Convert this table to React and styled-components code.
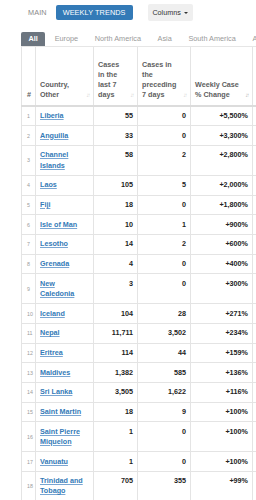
import styled, { createGlobalStyle } from "styled-components";

const GlobalStyle = createGlobalStyle`
  html, body {
    margin: 0;
    padding: 0;
    background: #fff;
    font-family: "Liberation Sans", Arial, sans-serif;
    overflow: hidden;
  }
`;

const Page = styled.div`
  width: 256px;
  height: 500px;
  overflow: hidden;
  padding-left: 21px;
  box-sizing: border-box;
`;

const TopBar = styled.div`
  display: flex;
  align-items: center;
  height: 25px;
`;

const ModeButton = styled.button`
  font-family: inherit;
  font-size: 7.3px;
  height: 14.5px;
  padding: 0 7px;
  border: none;
  border-radius: 2px;
  margin-right: ${(p) => (p.$active ? "15px" : "2px")};
  background: ${(p) => (p.$active ? "#337ab7" : "transparent")};
  color: ${(p) => (p.$active ? "#fff" : "#8a8a8a")};
  letter-spacing: 0.1px;
  text-transform: uppercase;
  cursor: pointer;
`;

const ColumnsButton = styled.button`
  font-family: inherit;
  font-size: 7.2px;
  height: 17px;
  width: 45px;
  padding: 0;
  border: none;
  border-radius: 2px;
  background: #efefef;
  color: #333;
  display: flex;
  align-items: center;
  justify-content: center;
  gap: 3px;
`;

const Caret = styled.span`
  width: 0;
  height: 0;
  border-left: 2px solid transparent;
  border-right: 2px solid transparent;
  border-top: 2px solid #333;
`;

const Tabs = styled.div`
  display: flex;
  align-items: center;
  height: 14px;
  margin-top: 6.5px;
  border-bottom: 1px solid #e6e6e6;
  white-space: nowrap;
`;

const Tab = styled.div`
  font-size: 7.3px;
  height: 14px;
  line-height: 14px;
  padding: 0 ${(p) => (p.$active ? "7.5px" : "8.3px")};
  margin-right: ${(p) => (p.$active ? "1px" : "0")};
  border-radius: 2px 2px 0 0;
  background: ${(p) => (p.$active ? "#6c757f" : "transparent")};
  color: ${(p) => (p.$active ? "#fff" : "#9a9a9a")};
  font-weight: ${(p) => (p.$active ? "bold" : "normal")};
`;

const Table = styled.table`
  border-collapse: collapse;
  table-layout: fixed;
  width: 292px;
  font-size: 7.2px;
  line-height: 10.3px;
`;

const Th = styled.th`
  border: 1px solid #e4e4e4;
  border-top: none;
  border-bottom: 2px solid #dcdcdc;
  vertical-align: bottom;
  text-align: left;
  padding: 13px 4px 4px;
  color: #5e5e5e;
  font-weight: bold;
  position: relative;
`;

const IndexTh = styled(Th)`
  padding-left: 5px;
  padding-right: 0;
`;

const SortIcon = styled.span`
  position: absolute;
  right: 4px;
  bottom: 4px;
  font-size: 6px;
  letter-spacing: -1.5px;
  font-weight: normal;
  color: ${(p) => (p.$active ? "#b0b0b0" : "#d2d2d2")};
`;

const Td = styled.td`
  border: 1px solid #e4e4e4;
  padding: 4.2px 4px;
  vertical-align: top;
  text-align: ${(p) => (p.$num ? "right" : "left")};
  font-weight: bold;
  color: #222;
`;

const IndexCell = styled.td`
  border: 1px solid #e4e4e4;
  padding: 4.2px 0 4.2px 5px;
  vertical-align: middle;
  font-size: 5.3px;
  color: #9c9c9c;
`;

const CountryLink = styled.a`
  color: #337ab7;
  font-weight: bold;
  text-decoration: underline;
  text-decoration-color: #7aa6d2;
`;

const rows = [
  ["Liberia", "55", "0", "+5,500%"],
  ["Anguilla", "33", "0", "+3,300%"],
  ["Channel Islands", "58", "2", "+2,800%"],
  ["Laos", "105", "5", "+2,000%"],
  ["Fiji", "18", "0", "+1,800%"],
  ["Isle of Man", "10", "1", "+900%"],
  ["Lesotho", "14", "2", "+600%"],
  ["Grenada", "4", "0", "+400%"],
  ["New Caledonia", "3", "0", "+300%"],
  ["Iceland", "104", "28", "+271%"],
  ["Nepal", "11,711", "3,502", "+234%"],
  ["Eritrea", "114", "44", "+159%"],
  ["Maldives", "1,382", "585", "+136%"],
  ["Sri Lanka", "3,505", "1,622", "+116%"],
  ["Saint Martin", "18", "9", "+100%"],
  ["Saint Pierre Miquelon", "1", "0", "+100%"],
  ["Vanuatu", "1", "0", "+100%"],
  ["Trinidad and Tobago", "705", "355", "+99%"],
];

const tabs = ["All", "Europe", "North America", "Asia", "South America", "Africa"];

const App = () => {
  return (
    <Page>
      <GlobalStyle />
      <TopBar>
        <ModeButton>Main</ModeButton>
        <ModeButton $active>Weekly Trends</ModeButton>
        <ColumnsButton>
          Columns <Caret />
        </ColumnsButton>
      </TopBar>
      <Tabs>
        {tabs.map((t, i) => (
          <Tab key={t} $active={i === 0}>
            {t}
          </Tab>
        ))}
      </Tabs>
      <Table>
        <colgroup>
          <col style={{ width: 14 }} />
          <col style={{ width: 58 }} />
          <col style={{ width: 44 }} />
          <col style={{ width: 53 }} />
          <col style={{ width: 62 }} />
          <col style={{ width: 61 }} />
        </colgroup>
        <thead>
          <tr>
            <IndexTh>#</IndexTh>
            <Th>
              Country,
              <br />
              Other
              <SortIcon>↓↑</SortIcon>
            </Th>
            <Th>
              Cases
              <br />
              in the
              <br />
              last 7
              <br />
              days
              <SortIcon>↓↑</SortIcon>
            </Th>
            <Th>
              Cases in
              <br />
              the
              <br />
              preceding
              <br />7 days
              <SortIcon>↓↑</SortIcon>
            </Th>
            <Th>
              Weekly Case
              <br />% Change
              <SortIcon $active>↓↑</SortIcon>
            </Th>
            <Th />
          </tr>
        </thead>
        <tbody>
          {rows.map((r, i) => (
            <tr key={r[0]}>
              <IndexCell>{i + 1}</IndexCell>
              <Td>
                <CountryLink href="#">{r[0]}</CountryLink>
              </Td>
              <Td $num>{r[1]}</Td>
              <Td $num>{r[2]}</Td>
              <Td $num>{r[3]}</Td>
              <Td $num />
            </tr>
          ))}
        </tbody>
      </Table>
    </Page>
  );
};

export default App;
